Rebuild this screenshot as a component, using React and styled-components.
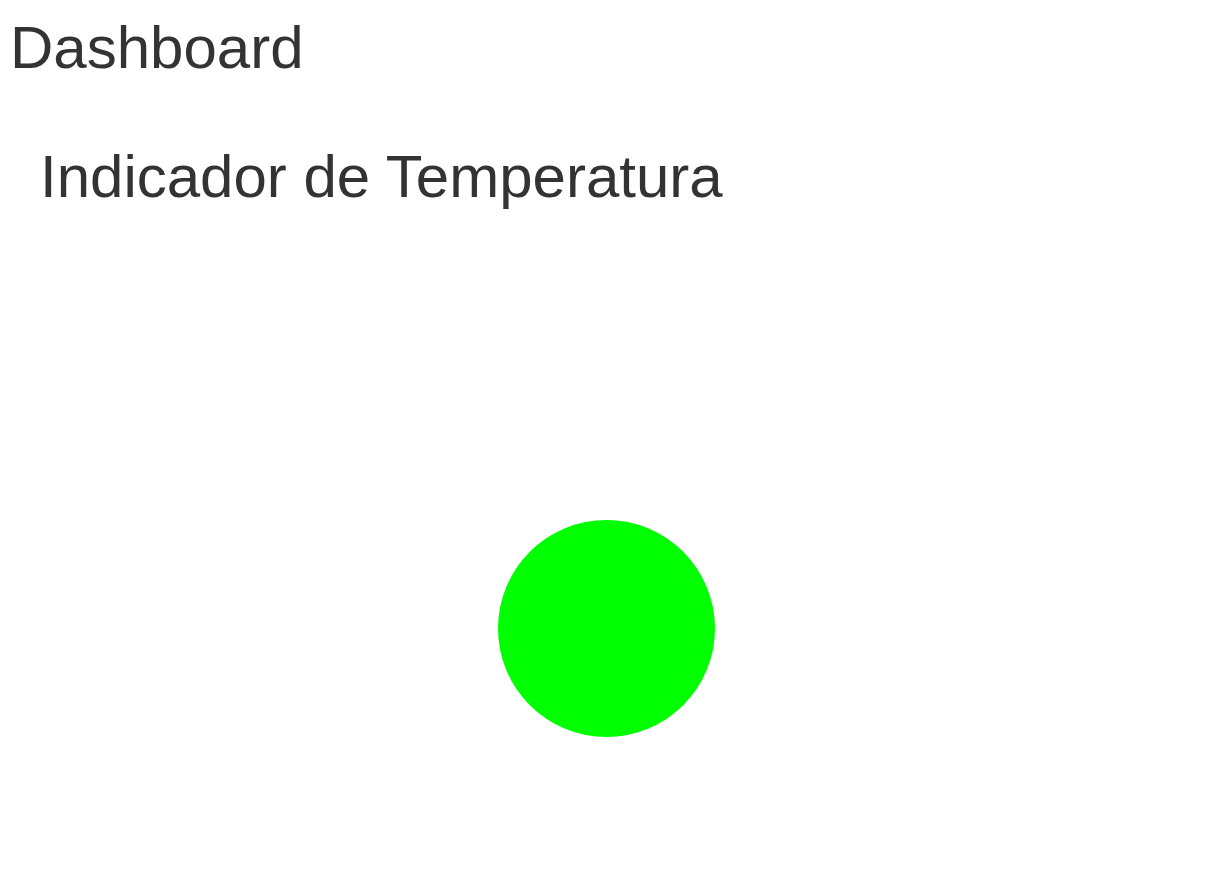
import React from "react";
import styled, { createGlobalStyle } from "styled-components";

const GlobalStyle = createGlobalStyle`
  html, body {
    margin: 0;
    padding: 0;
    background: #fff;
  }

  body {
    font-family: "Liberation Sans", Arial, sans-serif;
    color: #333;
  }
`;

const Page = styled.div`
  display: flex;
  flex-direction: column;
  padding: 13px 17px 0 10px;
`;

const Title = styled.h1`
  margin: 0;
  font-size: 60px;
  line-height: 69px;
  font-weight: normal;
`;

const Panel = styled.section`
  display: flex;
  flex-direction: column;
  margin-top: 60px;
`;

const PanelTitle = styled.h2`
  margin: 0 0 0 30px;
  font-size: 60px;
  line-height: 69px;
  font-weight: normal;
`;

const IndicatorRow = styled.div`
  display: flex;
  justify-content: center;
  margin-top: 309px;
  margin-left: -10px;
`;

const Light = styled.div`
  width: 217px;
  height: 217px;
  border-radius: 50%;
  background: ${({ color }) => color};
`;

const App = () => {
  const temperatureColor = "#00ff00";

  return (
    <>
      <GlobalStyle />
      <Page>
        <Title>Dashboard</Title>
        <Panel>
          <PanelTitle>Indicador de Temperatura</PanelTitle>
          <IndicatorRow>
            <Light color={temperatureColor} />
          </IndicatorRow>
        </Panel>
      </Page>
    </>
  );
};

export default App;
